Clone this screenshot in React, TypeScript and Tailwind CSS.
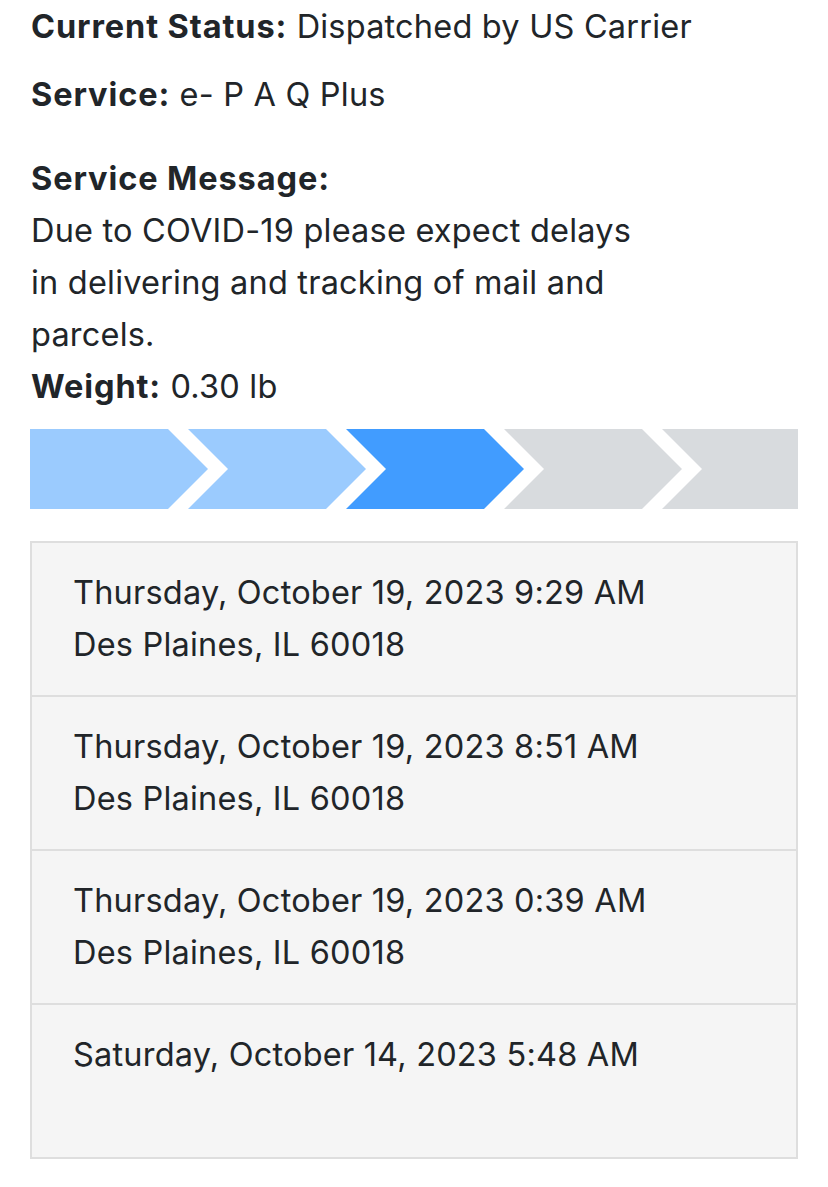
import React from 'react';

const segments = [
  { color: 'bg-[#9bcbfe]', first: true },
  { color: 'bg-[#9bcbfe]' },
  { color: 'bg-[#419cff]' },
  { color: 'bg-[#d8dbde]' },
  { color: 'bg-[#d8dbde]', last: true },
];

const events = [
  { when: 'Thursday, October 19, 2023 9:29 AM', where: 'Des Plaines, IL 60018' },
  { when: 'Thursday, October 19, 2023 8:51 AM', where: 'Des Plaines, IL 60018' },
  { when: 'Thursday, October 19, 2023 0:39 AM', where: 'Des Plaines, IL 60018' },
  { when: 'Saturday, October 14, 2023 5:48 AM', where: '\u00a0' },
];

function Progress() {
  return (
    <div className="flex h-[80px] mt-4">
      {segments.map((s, i) => {
        let cls = 'w-[178px] [clip-path:polygon(0_0,138px_0,178px_50%,138px_100%,0_100%,40px_50%)]';
        if (s.first) cls = 'w-[178px] [clip-path:polygon(0_0,138px_0,178px_50%,138px_100%,0_100%)]';
        if (s.last) cls = 'w-[136px] [clip-path:polygon(0_0,100%_0,100%_100%,0_100%,40px_50%)]';
        return <div key={i} className={`${cls} ${s.color} shrink-0 ${i > 0 ? '-ml-[20px]' : ''}`} />;
      })}
    </div>
  );
}

export default function App() {
  return (
    <div
      className="bg-white min-h-[1187px] px-[30px] pt-px text-[#212529] text-[32.5px] leading-[52px] tracking-[0.2px]"
      style={{ fontFamily: 'Inter, "Noto Sans", sans-serif' }}
    >
      <p className="pl-px"><b className="font-bold tracking-[0.9px]">Current Status:</b> Dispatched by US Carrier</p>
      <p className="pl-px mt-4"><b className="font-bold tracking-[0.9px]">Service:</b> e- P A Q Plus</p>
      <div className="pl-px mt-8">
        <b className="font-bold tracking-[0.9px]">Service Message:</b>
        <p className="w-[610px]">Due to COVID-19 please expect delays in delivering and tracking of mail and parcels.</p>
        <p><b className="font-bold tracking-[0.9px]">Weight:</b> 0.30 lb</p>
      </div>
      <Progress />
      <div className="mt-8 border-2 border-[#dedede] bg-[#f5f5f5]">
        {events.map((e, i) => (
          <div key={i} className={`pl-[41px] py-6 ${i > 0 ? 'border-t-2 border-[#dedede]' : ''}`}>
            <div>{e.when}</div>
            <div>{e.where}</div>
          </div>
        ))}
      </div>
    </div>
  );
}
